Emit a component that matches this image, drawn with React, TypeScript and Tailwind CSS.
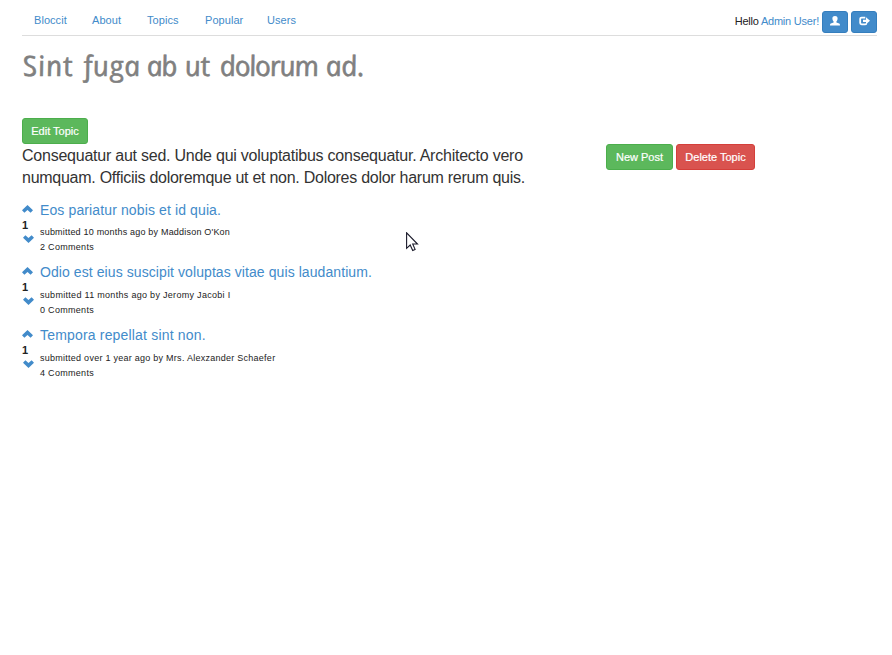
const navItems = [
  { label: "Bloccit", cls: "w-[58px] tracking-[0.05px]" },
  { label: "About", cls: "w-[55px] tracking-[0.05px]" },
  { label: "Topics", cls: "w-[58px] tracking-[0.05px]" },
  { label: "Popular", cls: "w-[62px] tracking-[0.05px]" },
  { label: "Users", cls: "tracking-[0.05px]" },
];

const titleWords = [
  { word: "Sint", cls: "w-[61px] tracking-[1.1px]" },
  { word: "fuga", cls: "w-[63px] tracking-[0.4px]" },
  { word: "ab", cls: "w-[38px] tracking-[-1.2px]" },
  { word: "ut", cls: "w-[35px] tracking-[0px]" },
  { word: "dolorum", cls: "w-[106px] tracking-[-1.2px]" },
  { word: "ad.", cls: "tracking-[-0.3px]" },
];

const posts = [
  {
    title: "Eos pariatur nobis et id quia.",
    meta: "submitted 10 months ago by Maddison O'Kon",
    comments: "2 Comments",
    box: "h-[62px]",
    titleCls: "tracking-[0.12px]",
    metaCls: "mt-[5px] tracking-[0.2px]",
  },
  {
    title: "Odio est eius suscipit voluptas vitae quis laudantium.",
    meta: "submitted 11 months ago by Jeromy Jacobi I",
    comments: "0 Comments",
    box: "h-[63px]",
    titleCls: "tracking-[0.08px]",
    metaCls: "mt-1.5 tracking-[0.3px]",
  },
  {
    title: "Tempora repellat sint non.",
    meta: "submitted over 1 year ago by Mrs. Alexzander Schaefer",
    comments: "4 Comments",
    box: "h-[63px]",
    titleCls: "tracking-[0.18px]",
    metaCls: "mt-1.5 tracking-[0.26px]",
  },
];

function Chevron({ down = false }: { down?: boolean }) {
  return (
    <svg width="12" height="8" viewBox="0 0 12 8" className={down ? "rotate-180" : ""}>
      <path d="M5.5 0 L11 5.2 L8.6 7.7 L5.5 5 L2.4 7.7 L0 5.2 Z" fill="#428bca" />
    </svg>
  );
}

export default function App() {
  return (
    <div className="relative h-[655px] w-[892px] overflow-hidden bg-white pl-[22px] pr-[15px] font-['Liberation_Sans',Arial,sans-serif] text-[#333]">
      <header className="flex h-9 justify-between border-b border-[#ddd] text-[11px] leading-4">
        <nav className="flex pl-3 pt-3 text-[#428bca]">
          {navItems.map((n) => (
            <a key={n.label} className={`block ${n.cls}`}>{n.label}</a>
          ))}
        </nav>
        <div className="flex pt-[11px]">
          <p className="mr-[3px] whitespace-nowrap pt-0.5 tracking-[-0.22px]">
            <span className="text-[#222]">Hello</span> <a className="text-[#428bca]">Admin User!</a>
          </p>
          <a className="mr-[3px] flex h-[22px] w-[26px] items-center justify-center rounded-[3px] border border-[#357ebd] bg-[#428bca]">
            <svg width="10" height="10" viewBox="0 0 10 10" fill="white" className="mb-0.5">
              <path d="M5 0C6.9 0 7.8 1.1 7.6 2.8C7.4 4.2 6.9 5 6.4 5.5V6.5L9.2 7.6C9.8 7.9 10 8.4 10 9.5H0C0 8.4.2 7.9.8 7.6L3.6 6.5V5.5C3.1 5 2.6 4.2 2.4 2.8C2.2 1.1 3.1 0 5 0Z" />
            </svg>
          </a>
          <a className="flex h-[22px] w-[26px] items-center justify-center rounded-[3px] border border-[#357ebd] bg-[#428bca]">
            <svg width="11" height="10" viewBox="0 0 11 10" fill="none" className="mb-0.5">
              <path d="M6.3 1.7H2.6Q1.2 1.7 1.2 2.8V7.1Q1.2 8.3 2.6 8.3H6.2Q7.4 8.3 7.4 7.2" stroke="white" strokeWidth="1.8" />
              <path d="M4 3.7H7V1.2L11 4.8L7 8.2V6H4Z" fill="white" />
            </svg>
          </a>
        </div>
      </header>

      <h1 className="mt-[9px] flex h-10 origin-[0_30px] skew-x-[11deg] pl-[2px] font-['Open_Sans','Noto_Sans',sans-serif] text-[28px] font-medium italic leading-10 text-[#808080] [-webkit-text-stroke:0.6px_#808080]">
        {titleWords.map((t) => (
          <span key={t.word} className={`block ${t.cls}`}>{t.word}</span>
        ))}
      </h1>

      <div className="mt-[33px]">
        <a className="flex h-[26px] w-[66px] items-center justify-center rounded-[3px] border border-[#4cae4c] bg-[#5cb85c] text-[11px] text-white [-webkit-text-stroke:0.2px_white]">Edit Topic</a>
      </div>
      <div className="flex">
        <p className="w-[584px] whitespace-nowrap pt-px text-[16px] leading-[22px]">
          <span className="block tracking-[-0.237px]">Consequatur aut sed. Unde qui voluptatibus consequatur. Architecto vero</span>
          <span className="block tracking-[-0.265px]">numquam. Officiis doloremque ut et non. Dolores dolor harum rerum quis.</span>
        </p>
        <div className="flex gap-[3px] text-[11px] text-white [-webkit-text-stroke:0.2px_white]">
          <a className="flex h-[26px] w-[67px] items-center justify-center rounded-[3px] border border-[#4cae4c] bg-[#5cb85c]">New Post</a>
          <a className="flex h-[26px] w-[79px] items-center justify-center rounded-[3px] border border-[#d43f3a] bg-[#d9534f]">Delete Topic</a>
        </div>
      </div>

      <main className="pt-[11px]">
        {posts.map((p) => (
          <article key={p.title} className={`flex ${p.box}`}>
            <div className="w-[18px] pt-[5px]">
              <Chevron />
              <p className="h-[15px] pt-[5px] text-[11px] font-bold leading-[15px] text-[#222]">1</p>
              <div className="pt-[7px]"><Chevron down /></div>
            </div>
            <div className="whitespace-nowrap">
              <h2 className={`h-5 text-[14px] leading-5 text-[#428bca] ${p.titleCls}`}>{p.title}</h2>
              <p className={`text-[9px] leading-[15px] text-[#222] ${p.metaCls}`}>{p.meta}</p>
              <p className="text-[9px] leading-[15px] tracking-[0.3px] text-[#222]">{p.comments}</p>
            </div>
          </article>
        ))}
      </main>

      <svg className="absolute left-[406px] top-[232px]" width="13" height="20" viewBox="0 0 13 20">
        <path d="M.6 .8V16.3L4.2 13L6.7 18.5L9.1 17.4L6.7 12H11.5Z" fill="white" stroke="#1a1a2a" strokeWidth="1.1" />
      </svg>
    </div>
  );
}
